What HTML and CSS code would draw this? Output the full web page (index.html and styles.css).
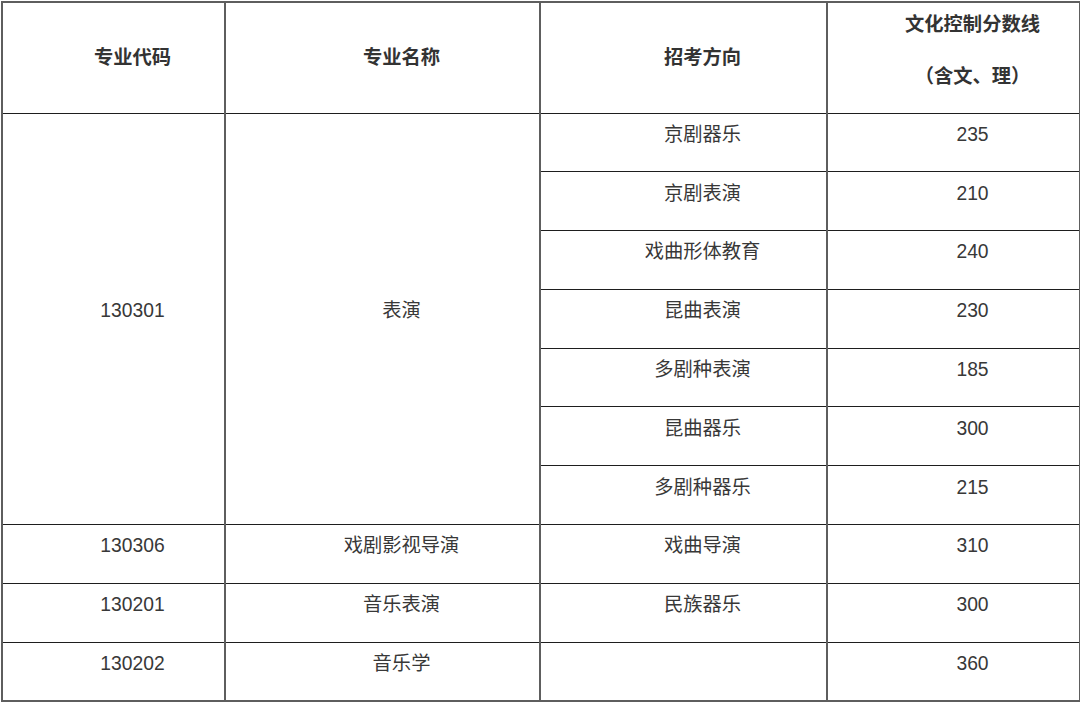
FILE: index.html
```html
<!DOCTYPE html>
<html lang="zh">
<head>
<meta charset="utf-8">
<link rel="stylesheet" href="styles.css">
</head>
<body>
<table class="score">
  <colgroup>
    <col class="c1"><col class="c2"><col class="c3"><col class="c4">
  </colgroup>
  <thead>
    <tr class="head">
      <th>专业代码</th>
      <th>专业名称</th>
      <th>招考方向</th>
      <th class="two"><div class="line">文化控制分数线</div><div class="line second">（含文、理）</div></th>
    </tr>
  </thead>
  <tbody>
    <tr><td rowspan="7">130301</td><td rowspan="7">表演</td><td>京剧器乐</td><td>235</td></tr>
    <tr><td>京剧表演</td><td>210</td></tr>
    <tr><td>戏曲形体教育</td><td>240</td></tr>
    <tr><td>昆曲表演</td><td>230</td></tr>
    <tr><td>多剧种表演</td><td>185</td></tr>
    <tr><td>昆曲器乐</td><td>300</td></tr>
    <tr><td>多剧种器乐</td><td>215</td></tr>
    <tr><td>130306</td><td>戏剧影视导演</td><td>戏曲导演</td><td>310</td></tr>
    <tr><td>130201</td><td>音乐表演</td><td>民族器乐</td><td>300</td></tr>
    <tr><td>130202</td><td>音乐学</td><td></td><td>360</td></tr>
  </tbody>
</table>
</body>
</html>
```

FILE: styles.css
```css
html, body {
  margin: 0;
  padding: 0;
  background: #ffffff;
}
body {
  padding: 1px 0 0 1px;
  font-family: "Liberation Sans", "Noto Sans CJK SC", sans-serif;
  color: #383838;
  font-size: 19.3px;
}
.score {
  border-collapse: collapse;
  table-layout: fixed;
  width: 1078px;
}
.c1 { width: 223px; }
.c2 { width: 315px; }
.c3 { width: 287px; }
.c4 { width: 253px; }
.score th,
.score td {
  border-left: 2px solid #5e5e5e;
  border-right: 2px solid #5e5e5e;
  border-top: 1px solid #1e1e1e;
  border-bottom: 1px solid #1e1e1e;
  text-align: center;
  vertical-align: middle;
  padding: 0 0 15px 38px;
  line-height: 26px;
}
.score thead th {
  border-top: 2px solid #5e5e5e;
  font-weight: bold;
  color: #333333;
  padding: 0 0 0 38px;
}
.score thead tr.head {
  height: 111px;
}
.score thead th.two {
  vertical-align: top;
  padding-top: 9px;
}
.two .line {
  line-height: 26px;
}
.two .second {
  margin-top: 26px;
}
.score tbody tr {
  height: 58.8px;
}
.score tbody tr:last-child td {
  border-bottom: 2px solid #5e5e5e;
}
```
